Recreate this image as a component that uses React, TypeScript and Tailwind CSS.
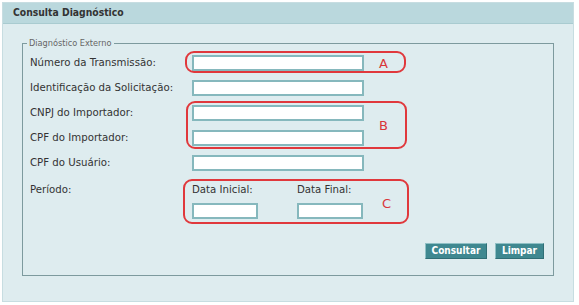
import React from "react";

const FONT = "font-['DejaVu_Sans',Verdana,sans-serif]";
const COND = "font-['DejaVu_Sans_Condensed','DejaVu_Sans',sans-serif]";

const Field = ({ label, first }: { label: string; first?: boolean }) => {
  return (
    <div className={`flex items-center h-[16px] ${first ? "" : "mt-[9px]"}`}>
      <span className="w-[169px] pl-[7px] text-[10.2px] text-[#333]">{label}</span>
      <input className="w-[172px] h-[16px] bg-white border-2 border-[#86b8bd] outline-none" />
    </div>
  );
};

const Mark = ({ className, letter, letterClass }: { className: string; letter: string; letterClass: string }) => {
  return (
    <div className={`absolute border-2 border-[#e0383c] rounded-[9px] ${className}`}>
      <span className={`absolute text-[13px] text-[#d9363a] ${letterClass}`}>{letter}</span>
    </div>
  );
};

const App = () => {
  return (
    <div className={`relative w-[579px] h-[305px] bg-white ${FONT}`}>
      <div className="absolute left-[2px] top-[2px] w-[572px] h-[300px] border border-[#c7dde1] bg-[#deecef]">
        <div className="h-[21px] bg-[#bad8dd] border-b border-[#a9cbd0] flex items-center pl-[10px]">
          <h1 className={`text-[10.3px] font-bold text-[#333] ${COND}`}>Consulta Diagnóstico</h1>
        </div>

        <fieldset className="mx-[19px] mt-[14px] h-[238px] border border-[#7d9a9e] pl-0 pr-[9px]">
          <legend className="ml-[4px] px-[2px] text-[8.2px] text-[#666] leading-[11px]">Diagnóstico Externo</legend>

          <div className="mt-[6px]">
            <Field label="Número da Transmissão:" first />
            <Field label="Identificação da Solicitação:" />
            <Field label="CNPJ do Importador:" />
            <Field label="CPF do Importador:" />
            <Field label="CPF do Usuário:" />

            <div className="flex mt-[12px]">
              <span className="w-[169px] pl-[7px] text-[10.2px] text-[#333] leading-[14px]">Período:</span>
              <div className="flex gap-[39px]">
                <div className="flex flex-col">
                  <span className="text-[10.2px] text-[#333] leading-[14px]">Data Inicial:</span>
                  <input className="mt-[6px] w-[66px] h-[16px] bg-white border-2 border-[#86b8bd] outline-none" />
                </div>
                <div className="flex flex-col">
                  <span className="text-[10.2px] text-[#333] leading-[14px]">Data Final:</span>
                  <input className="mt-[6px] w-[66px] h-[16px] bg-white border-2 border-[#86b8bd] outline-none" />
                </div>
              </div>
            </div>

            <div className="flex justify-end gap-[8px] mt-[24px]">
              <button className={`w-[62px] h-[16px] bg-[#3f8890] border border-[#2f6e75] border-t-[#8fc0c5] border-l-[#8fc0c5] text-white text-[10px] font-bold leading-none ${COND}`}>
                Consultar
              </button>
              <button className={`w-[49px] h-[16px] bg-[#3f8890] border border-[#2f6e75] border-t-[#8fc0c5] border-l-[#8fc0c5] text-white text-[10px] font-bold leading-none ${COND}`}>
                Limpar
              </button>
            </div>
          </div>
        </fieldset>
      </div>

      <Mark className="left-[185px] top-[51px] w-[221px] h-[22px]" letter="A" letterClass="left-[192px] top-[1px]" />
      <Mark className="left-[186px] top-[101px] w-[221px] h-[48px]" letter="B" letterClass="left-[191px] top-[13px]" />
      <Mark className="left-[183px] top-[179px] w-[226px] h-[45px]" letter="C" letterClass="left-[197px] top-[13px]" />
    </div>
  );
};

export default App;
